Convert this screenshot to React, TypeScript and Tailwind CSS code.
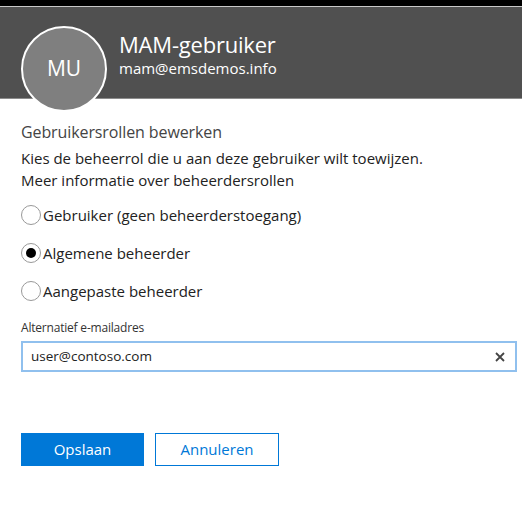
import { useState } from 'react';

const roles = ['Gebruiker (geen beheerderstoegang)', 'Algemene beheerder', 'Aangepaste beheerder'];

export default function App() {
  const [role, setRole] = useState(1);
  const [email, setEmail] = useState('user@contoso.com');

  return (
    <div className="w-[522px] h-[529px] bg-white text-[#333] overflow-hidden" style={{ fontFamily: '"Open Sans", "Noto Sans", sans-serif' }}>
      {/* header */}
      <div className="h-[6px] bg-black" />
      <div className="relative h-[93px] bg-[#505050] border-t border-[#c8c8c8] border-b border-b-[#8c8c8c]">
        <div className="absolute left-[21px] top-[19px] w-[86px] h-[86px] rounded-full border-2 border-white bg-[#7f7f7f] flex items-center justify-center text-white text-[21px]">
          MU
        </div>
        <div className="pl-[119px] pt-[23px] text-white">
          <div className="text-[22px] leading-[28px] -tracking-[0.2px]">MAM-gebruiker</div>
          <div className="text-[15px] leading-[20px]">mam@emsdemos.info</div>
        </div>
      </div>

      <div className="px-[21px] pt-[21px]">
        <h2 className="text-[16px] leading-[24px] text-[#444] -tracking-[0.1px]">Gebruikersrollen bewerken</h2>
        <p className="mt-[3px] text-[15px] leading-[22px] text-[#222]">
          Kies de beheerrol die u aan deze gebruiker wilt toewijzen.
          <br />
          Meer informatie over beheerdersrollen
        </p>

        <div className="mt-[13px] flex flex-col gap-[16px]">
          {roles.map((r, i) => (
            <label key={r} className="flex items-center cursor-pointer" onClick={() => setRole(i)}>
              <span className="w-[20px] h-[20px] rounded-full border border-[#999] bg-white flex items-center justify-center">
                {role === i && <span className="w-[10px] h-[10px] rounded-full bg-black" />}
              </span>
              <span className="ml-[2px] text-[15px] leading-[22px] text-[#222]">{r}</span>
            </label>
          ))}
        </div>

        <div className="mt-[18px] text-[12px] leading-[16px] text-[#333] -tracking-[0.2px]">Alternatief e-mailadres</div>
        <div className="mt-[5px] h-[31px] w-[496px] border-2 border-[#90c0ee] flex items-center pl-[8px] pr-[10px]">
          <input
            value={email}
            onChange={(e) => setEmail(e.target.value)}
            className="flex-1 outline-none text-[13.5px] text-[#222] bg-transparent"
          />
          <svg width="10" height="10" viewBox="0 0 10 10" className="text-[#444]">
            <path d="M1 1 L9 9 M9 1 L1 9" stroke="currentColor" strokeWidth="1.8" />
          </svg>
        </div>

        <div className="mt-[61px] flex gap-[11px]">
          <button className="w-[123px] h-[33px] bg-[#0078d7] text-white text-[15px]">Opslaan</button>
          <button className="w-[124px] h-[33px] border border-[#0078d7] text-[#0078d7] text-[15px] bg-white">Annuleren</button>
        </div>
      </div>
    </div>
  );
}
